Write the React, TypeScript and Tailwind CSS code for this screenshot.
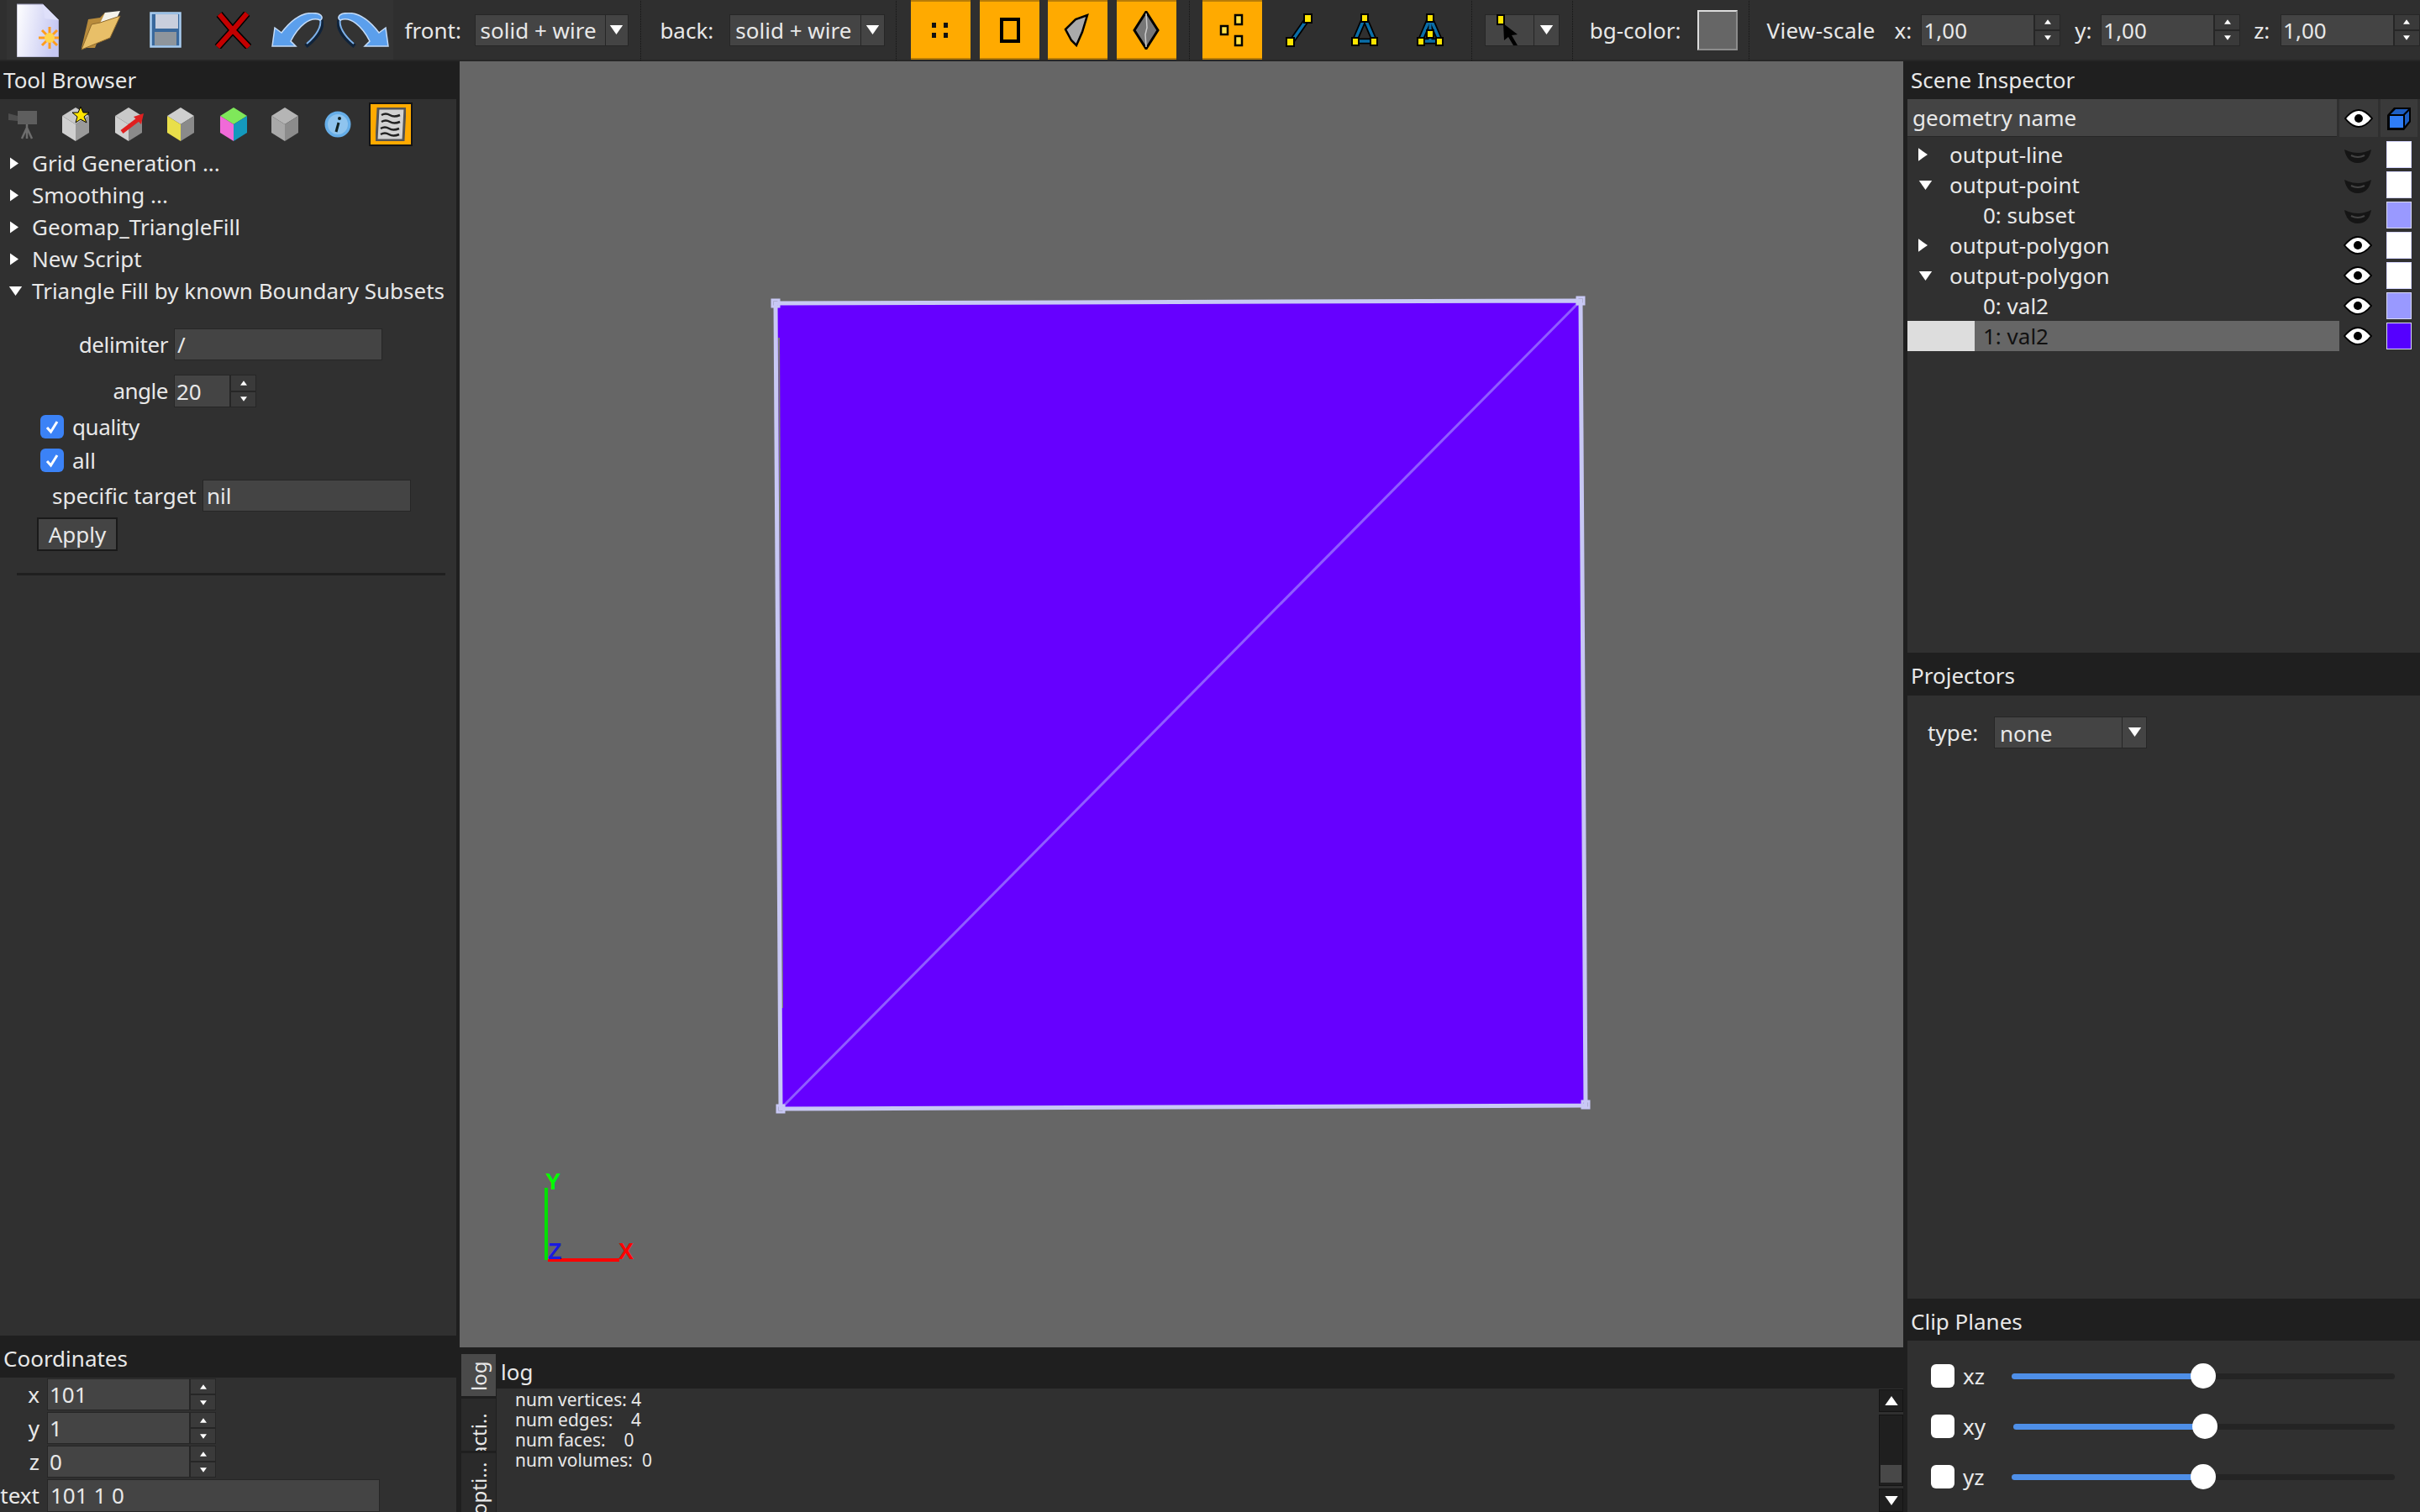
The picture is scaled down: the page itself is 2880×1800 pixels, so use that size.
import React from "react";

// small shared widgets ------------------------------------------------------

const Caret = ({ dir = "down", className = "" }: { dir?: "down" | "right" | "up"; className?: string }) => {
  if (dir === "right") {
    return (
      <svg viewBox="0 0 10 14" className={className}>
        <polygon points="0,0 10,7 0,14" fill="#fff" />
      </svg>
    );
  }
  return (
    <svg viewBox="0 0 14 10" className={className}>
      <polygon points={dir === "down" ? "0,0 14,0 7,10" : "0,10 14,10 7,0"} fill="#fff" />
    </svg>
  );
};

const Select = ({ label, w, split }: { label: React.ReactNode; w: string; split: string }) => (
  <div className={`flex h-[38px] border border-[#262626] bg-[#262626] gap-[1px] ${w}`}>
    <div className={`flex items-center pl-[6px] pt-[2px] bg-[#444444] text-[26px] ${split}`}>{label}</div>
    <div className="flex flex-1 justify-center pt-[12px] bg-[#444444]">
      <Caret className="w-[17px] h-[11px]" />
    </div>
  </div>
);

const Spin = ({ value, w, h = "h-[38px]" }: { value: string; w: string; h?: string }) => (
  <div className={`flex ${h} ${w}`}>
    <div className="flex flex-1 items-center pl-[2px] pt-[1px] bg-[#444444] border border-[#262626] text-[26px]">{value}</div>
    <div className="flex flex-col w-[31px] bg-[#262626] gap-[2px] p-[1px]">
      <div className="flex flex-1 items-center justify-center bg-[#3a3a3a]">
        <Caret dir="up" className="w-[8px] h-[6px]" />
      </div>
      <div className="flex flex-1 items-center justify-center bg-[#3a3a3a]">
        <Caret className="w-[8px] h-[6px]" />
      </div>
    </div>
  </div>
);

const Dots = ({ className }: { className: string }) => (
  <div className={`w-0 h-[73px] border-l border-dotted border-[#151515] ${className}`} />
);

const OrangeBtn = ({ children, className = "" }: { children: React.ReactNode; className?: string }) => (
  <div className={`flex items-center justify-center w-[71px] h-[71px] bg-[#ffaa00] border-y-2 border-[#b87c08] ${className}`}>
    {children}
  </div>
);

const Title = ({ children, h = "h-[45px]" }: { children: React.ReactNode; h?: string }) => (
  <div className={`flex items-center shrink-0 pl-[4px] text-[26px] bg-[#1f1f1f] ${h}`}>{children}</div>
);

const Check = ({ on }: { on?: boolean }) => (
  <div className={`flex items-center justify-center w-[28px] h-[28px] rounded-[6px] ${on ? "bg-[#3b82f6]" : "bg-white"}`}>
    {on && (
      <svg viewBox="0 0 20 20" className="w-[20px] h-[20px]">
        <path d="M4 11 L8.5 16 L16 4" fill="none" stroke="#fff" strokeWidth="3" />
      </svg>
    )}
  </div>
);

// drawn icons ---------------------------------------------------------------

const NewDoc = () => (
  <svg viewBox="0 0 50 64" className="w-[50px] h-[64px]">
    <defs>
      <linearGradient id="docg" x1="0" y1="0" x2="1" y2="0.2">
        <stop offset="0" stopColor="#ffffff" />
        <stop offset="1" stopColor="#c6c8f2" />
      </linearGradient>
    </defs>
    <path d="M0 1 L31 1 L50 20 L50 64 L0 64 Z" fill="url(#docg)" stroke="#9a9ab8" />
    <path d="M31 1 L33 18 L50 20 Z" fill="#dfe0fa" />
    <g stroke="#ff9d1e" strokeWidth="3">
      <path d="M39 28 L39 54 M26 41 L52 41 M30 32 L48 50 M48 32 L30 50" />
    </g>
    <circle cx="39" cy="41" r="6" fill="#ffd650" />
  </svg>
);

const Folder = () => (
  <svg viewBox="0 0 50 50" className="w-[50px] h-[50px]">
    <path d="M2 46 L10 12 L24 10 L30 4 L32 10 L18 46 Z" fill="#b98c3c" />
    <path d="M14 38 L30 4 L48 2 L36 28 Z" fill="#f4f2ea" />
    <path d="M2 48 L14 18 L24 16 L48 8 L36 34 Z" fill="#e8bf68" stroke="#8f6a2c" />
  </svg>
);

const Floppy = () => (
  <svg viewBox="0 0 38 44" className="w-[38px] h-[44px]">
    <rect x="1.5" y="1.5" width="35" height="40" fill="#39689c" stroke="#a9cdf0" strokeWidth="2.5" />
    <rect x="7" y="3" width="27" height="17" fill="#c9cfdd" />
    <rect x="6" y="24" width="26" height="16" fill="#8e959c" />
  </svg>
);

const RedX = () => (
  <svg viewBox="0 0 44 44" className="w-[44px] h-[44px]">
    <path d="M6 3 L22 22 L39 2 M4 42 L22 22 L41 42" fill="none" stroke="#000" strokeWidth="9" />
    <path d="M6 3 L22 22 L39 2 M4 42 L22 22 L41 42" fill="none" stroke="#c40000" strokeWidth="6" />
  </svg>
);

const Curl = ({ flip }: { flip?: boolean }) => (
  <svg viewBox="0 0 62 42" className={`w-[62px] h-[42px] ${flip ? "-scale-x-100" : ""}`}>
    <path d="M58 6 C63 16 56 28 41 40" fill="none" stroke="#10233a" strokeWidth="5" />
    <path d="M58 8 C60 16 54 27 42 37" fill="none" stroke="#7fb2ea" strokeWidth="2" />
    <path
      d="M1 40 L4 18 L12 24 C24 8 38 -2 54 1 C60 2 62 7 58 9 C46 4 32 16 23 34 L29 40 Z"
      fill="#5b9fec"
      stroke="#c5dcf8"
      strokeWidth="1.5"
    />
  </svg>
);

const Cube = ({ top, left, right, children }: { top: string; left: string; right: string; children?: React.ReactNode }) => (
  <svg viewBox="0 0 36 42" className="w-[36px] h-[42px]">
    <polygon points="18,1 34,11 18,21 2,11" fill={top} />
    <polygon points="2,11 18,21 18,41 2,31" fill={left} />
    <polygon points="34,11 18,21 18,41 34,31" fill={right} />
    {children}
  </svg>
);

const Camera = () => (
  <svg viewBox="0 0 36 36" className="w-[36px] h-[36px]">
    <rect x="11" y="2" width="23" height="16" fill="#5e5e5e" />
    <polygon points="0,5 11,8 11,14 0,13" fill="#4e4e4e" />
    <path d="M22 18 L22 22 M22 22 L16 35 M22 22 L22 35 M22 22 L28 35" stroke="#6d6d6d" strokeWidth="2.5" fill="none" />
  </svg>
);

const Info = () => (
  <svg viewBox="0 0 32 32" className="w-[32px] h-[32px]">
    <circle cx="16" cy="16" r="15.5" fill="#66aee8" />
    <circle cx="16" cy="16" r="12" fill="#8fc4ee" />
    <path d="M17 14 L14 25" stroke="#122" strokeWidth="3" />
    <circle cx="18" cy="9" r="2" fill="#122" />
  </svg>
);

const Notes = () => (
  <svg viewBox="0 0 36 40" className="w-[36px] h-[40px]">
    <polygon points="3,1 35,1 33,39 1,39" fill="#d2d2d2" stroke="#555" strokeWidth="3" />
    <path d="M7 9 Q12 6 17 9 T29 9 M7 17 Q12 14 17 17 T29 17 M6 25 Q11 22 16 25 T28 25 M6 32 Q11 29 16 32 T28 32" fill="none" stroke="#222" strokeWidth="2.5" />
  </svg>
);

const Eye = ({ open = true }: { open?: boolean }) =>
  open ? (
    <svg viewBox="0 0 34 24" className="w-[34px] h-[24px]">
      <path d="M1 12 Q17 -8 33 12 Q17 32 1 12 Z" fill="#fff" stroke="#000" strokeWidth="2" />
      <circle cx="17" cy="12" r="5" fill="#000" />
    </svg>
  ) : (
    <svg viewBox="0 0 34 24" className="w-[34px] h-[24px]">
      <path d="M1 6 Q17 14 33 6 Q30 22 17 22 Q4 22 1 6 Z" fill="#151515" />
      <path d="M9 13 Q17 17 25 13" stroke="#444" strokeWidth="2" fill="none" />
    </svg>
  );

const BlueCube = () => (
  <svg viewBox="0 0 32 32" className="w-[32px] h-[32px]">
    <polygon points="2,12 10,3 30,3 30,20 22,30 2,30" fill="#000" />
    <rect x="5" y="13" width="16" height="14" fill="#2f7df6" />
    <polygon points="6,11 12,5 27,5 21,11" fill="#1d5fc4" />
    <polygon points="23,12 28,7 28,19 23,25" fill="#1d5fc4" />
  </svg>
);

const Y = "#ffe500";
const B = "#0a6ea8";

const PointsIcon = () => (
  <svg viewBox="0 0 30 40" className="w-[30px] h-[40px]">
    <g fill="#ffe24a" stroke="#000" strokeWidth="2.5">
      <rect x="2" y="15" width="8" height="10" />
      <rect x="19" y="2" width="8" height="11" />
      <rect x="19" y="27" width="8" height="11" />
    </g>
  </svg>
);

const LineIcon = () => (
  <svg viewBox="0 0 32 40" className="w-[32px] h-[40px]">
    <path d="M6 35 L27 5" stroke="#000" strokeWidth="7" />
    <path d="M6 35 L27 5" stroke={B} strokeWidth="3.5" />
    <g fill={Y} stroke="#000" strokeWidth="2">
      <rect x="1" y="29" width="9" height="10" />
      <rect x="22" y="1" width="9" height="10" />
    </g>
  </svg>
);

const TriIcon = ({ inner }: { inner?: boolean }) => (
  <svg viewBox="0 0 32 40" className="w-[32px] h-[40px]">
    <polygon points="16,5 4,33 28,33" fill="none" stroke="#000" strokeWidth="7" />
    <polygon points="16,5 4,33 28,33" fill="none" stroke={B} strokeWidth="3.5" />
    {inner && <path d="M16 5 L16 33" stroke={B} strokeWidth="3" />}
    <g fill={Y} stroke="#000" strokeWidth="2">
      <rect x="12" y="1" width="8" height="9" />
      <rect x="1" y="29" width="8" height="9" />
      <rect x="23" y="29" width="8" height="9" />
      {inner && <rect x="12" y="20" width="8" height="9" />}
    </g>
  </svg>
);

const Arrow = () => (
  <svg viewBox="0 0 30 38" className="w-[30px] h-[38px]">
    <rect x="1" y="1" width="8" height="11" fill={Y} stroke="#000" strokeWidth="2" />
    <polygon points="8,11 25,24 18,25 25,37 20,37 14,27 9,31" fill="#000" />
  </svg>
);

// page parts ----------------------------------------------------------------

const Toolbar = () => (
  <div className="flex items-center shrink-0 h-[73px] bg-[#2f2f2f] border-b-2 border-[#262626]">
    <div className="flex items-center ml-[8px] w-[460px] h-[71px] bg-[#333333]">
      <div className="ml-[12px]"><NewDoc /></div>
      <div className="ml-[25px]"><Folder /></div>
      <div className="ml-[33px]"><Floppy /></div>
      <div className="ml-[39px]"><RedX /></div>
      <div className="ml-[24px]"><Curl /></div>
      <div className="ml-[16px]"><Curl flip /></div>
    </div>
    <span className="ml-[14px] pt-[2px] text-[26px] w-[83px]">front:</span>
    <Select label="solid + wire" w="w-[184px]" split="w-[154px]" />
    <Dots className="ml-[14px]" />
    <span className="ml-[22px] pt-[2px] text-[26px] w-[83px]">back:</span>
    <Select label="solid + wire" w="w-[185px]" split="w-[155px]" />
    <Dots className="ml-[13px]" />
    <OrangeBtn className="ml-[17px]">
      <svg viewBox="0 0 24 24" className="w-[24px] h-[24px]">
        <path d="M1 3h5v6H1zM15 3h5v6h-5zM1 15h5v6H1zM15 15h5v6h-5z" fill="#111" />
      </svg>
    </OrangeBtn>
    <OrangeBtn className="ml-[11px]">
      <div className="w-[24px] h-[30px] border-[4px] border-black" />
    </OrangeBtn>
    <OrangeBtn className="ml-[10px]">
      <svg viewBox="0 0 32 40" className="w-[32px] h-[40px]">
        <polygon points="2,19 14,7 28,2 22,22 15,38 9,32" fill="#aaaaaa" stroke="#000" strokeWidth="2.5" />
      </svg>
    </OrangeBtn>
    <OrangeBtn className="ml-[11px]">
      <svg viewBox="0 0 32 46" className="w-[32px] h-[46px]">
        <polygon points="16,1 30,23 16,45 2,23" fill="#777" stroke="#000" strokeWidth="3" />
        <path d="M16 3 L17 20 L15 28 L16 43" stroke="#ccc" strokeWidth="1.5" fill="none" />
      </svg>
    </OrangeBtn>
    <Dots className="ml-[15px]" />
    <OrangeBtn className="ml-[15px]"><PointsIcon /></OrangeBtn>
    <div className="ml-[28px]"><LineIcon /></div>
    <div className="ml-[46px]"><TriIcon /></div>
    <div className="ml-[46px]"><TriIcon inner /></div>
    <Dots className="ml-[33px]" />
    <div className="flex ml-[15px] w-[89px] h-[38px] border border-[#262626] bg-[#262626] gap-[1px]">
      <div className="flex items-center justify-center w-[57px] bg-[#444444]"><Arrow /></div>
      <div className="flex flex-1 justify-center pt-[12px] bg-[#444444]">
        <Caret className="w-[17px] h-[11px]" />
      </div>
    </div>
    <Dots className="ml-[15px]" />
    <span className="ml-[20px] pt-[2px] text-[26px] w-[128px]">bg-color:</span>
    <div className="w-[48px] h-[48px] bg-[#666666] border-2 border-[#8c8c8c] border-t-[#dddddd] border-l-[#dddddd]" />
    <Dots className="ml-[13px]" />
    <span className="ml-[21px] pt-[2px] text-[26px] w-[152px] tracking-[0.3px]">View-scale</span>
    <span className="pt-[2px] text-[26px] w-[32px]">x:</span>
    <Spin value="1,00" w="w-[166px]" />
    <span className="ml-[17px] pt-[2px] text-[26px] w-[31px]">y:</span>
    <Spin value="1,00" w="w-[166px]" />
    <span className="ml-[16px] pt-[2px] text-[26px] w-[32px]">z:</span>
    <Spin value="1,00" w="w-[166px]" />
  </div>
);

const treeRows = ["Grid Generation ...", "Smoothing ...", "Geomap_TriangleFill", "New Script", "Triangle Fill by known Boundary Subsets"];

const LeftPanel = () => (
  <div className="flex flex-col shrink-0 w-[547px] bg-[#1f1f1f]">
    <Title>Tool Browser</Title>
    <div className="flex flex-col flex-1 w-[543px] bg-[#303030]">
      <div className="flex items-center shrink-0 h-[57px] pl-[10px] pt-[3px]">
        <div className="w-[62px]"><Camera /></div>
        <div className="w-[63px]">
          <Cube top="#c9c9c9" left="#d0d0d0" right="#9a9a9a">
            <polygon points="24,0 27,7 34,7 28,12 31,19 24,15 18,19 20,12 14,7 21,7" fill={Y} stroke="#000" />
          </Cube>
        </div>
        <div className="w-[62px]">
          <Cube top="#c9c9c9" left="#d0d0d0" right="#8a8a8a">
            <path d="M10 30 L31 14" stroke="#e02020" strokeWidth="5" />
            <polygon points="36,8 33,21 24,12" fill="#e02020" />
          </Cube>
        </div>
        <div className="w-[63px]"><Cube top="#cfcfcf" left="#e9df4a" right="#8a8a8a" /></div>
        <div className="w-[61px]"><Cube top="#7fe85a" left="#f06ad8" right="#1499bd" /></div>
        <div className="w-[65px]"><Cube top="#b5b5b5" left="#a8a8a8" right="#8c8c8c" /></div>
        <div className="w-[53px]"><Info /></div>
        <div className="flex items-center justify-center w-[52px] h-[52px] bg-[#ffaa00] border-2 border-[#141414]"><Notes /></div>
      </div>
      {treeRows.map((t, i) => (
        <div key={t} className="flex items-center shrink-0 h-[38px] pl-[10px] text-[26px]">
          <div className="w-[28px]">
            {i === 4 ? <Caret className="w-[17px] h-[11px]" /> : <Caret dir="right" className="ml-[2px] w-[10px] h-[15px]" />}
          </div>
          {t}
        </div>
      ))}
      <div className="flex items-center mt-[26px] h-[38px] text-[26px]">
        <span className="w-[200px] text-right tracking-[-0.4px]">delimiter</span>
        <div className="flex items-center ml-[7px] w-[248px] h-[38px] pl-[3px] bg-[#444444] border border-[#262626]">/</div>
      </div>
      <div className="flex items-center mt-[17px] h-[39px] text-[26px]">
        <span className="w-[200px] text-right tracking-[-0.5px]">angle</span>
        <Spin value="20" w="w-[98px] ml-[7px]" h="h-[39px]" />
      </div>
      <div className="flex items-center gap-[10px] mt-[9px] ml-[48px] h-[28px] text-[26px] tracking-[-0.4px]">
        <Check on />
        quality
      </div>
      <div className="flex items-center gap-[10px] mt-[12px] ml-[48px] h-[28px] text-[26px]">
        <Check on />
        all
      </div>
      <div className="flex items-center mt-[9px] h-[38px] text-[26px]">
        <span className="ml-[62px] w-[179px]">specific target</span>
        <div className="flex items-center w-[248px] h-[38px] pl-[4px] bg-[#444444] border border-[#262626]">nil</div>
      </div>
      <div className="flex items-center justify-center mt-[7px] ml-[44px] w-[96px] h-[40px] bg-[#444444] border-2 border-[#1a1a1a] text-[26px]">Apply</div>
      <div className="mt-[26px] ml-[20px] w-[510px] h-[3px] bg-[#1f1f1f]" />
    </div>
    <Title h="h-[50px] pt-[4px]">Coordinates</Title>
    <div className="flex flex-col shrink-0 h-[160px] w-[543px] bg-[#303030] text-[26px]">
      {["101", "1", "0"].map((v, i) => (
        <div key={i} className="flex items-center h-[40px]">
          <span className="w-[47px] text-right">{["x", "y", "z"][i]}</span>
          <Spin value={v} w="w-[201px] ml-[9px]" />
        </div>
      ))}
      <div className="flex items-center h-[40px]">
        <span className="w-[47px] text-right">text</span>
        <div className="flex items-center ml-[9px] w-[396px] h-[39px] pl-[3px] bg-[#444444] border border-[#262626]">101 1 0</div>
      </div>
    </div>
  </div>
);

const Canvas = () => (
  <div className="shrink-0 h-[1531px] bg-[#666666]">
    <svg viewBox="547 73 1718 1531" className="block w-full h-full">
      <polygon points="923,361 1881,358 1887,1316 929,1320" fill="#6600ff" />
      <path d="M927 402 L931 1200" stroke="#777777" strokeWidth="2" />
      <path d="M929 1200 L930 1310" stroke="#5c9a4a" strokeWidth="2" />
      <path d="M929 1320 L1881 358" stroke="#8f5cff" strokeWidth="3" />
      <polygon points="923,361 1881,358 1887,1316 929,1320" fill="none" stroke="#c8c8f5" strokeWidth="5" />
      <g fill="none" stroke="#c8c8f5" strokeWidth="3">
        <rect x="919" y="357" width="8" height="8" />
        <rect x="1877" y="354" width="8" height="8" />
        <rect x="1883" y="1311" width="8" height="8" />
        <rect x="925" y="1316" width="8" height="8" />
      </g>
      <rect x="648" y="1414" width="4" height="86" fill="#00e000" />
      <rect x="652" y="1498" width="85" height="4" fill="#ff0000" />
      <g className="font-['Liberation_Sans',sans-serif]" fontSize="27" fontWeight="700">
        <text x="649" y="1416" fill="#00ff00">Y</text>
        <text x="652" y="1499" fill="#1a1ae0">Z</text>
        <text x="736" y="1499" fill="#ff0000">X</text>
      </g>
    </svg>
  </div>
);

const logLines = ["num vertices: 4", "num edges:    4", "num faces:    0", "num volumes:  0"];

const Tab = ({ label, active, className }: { label: string; active?: boolean; className: string }) => (
  <div className={`flex justify-center overflow-hidden rotate-180 w-[41px] ${active ? "bg-[#4a4a4a]" : "bg-[#2a2a2a]"} ${className}`}>
    <span className="[writing-mode:vertical-rl] text-[24px] whitespace-nowrap">{label}</span>
  </div>
);

const LogPanel = () => (
  <div className="flex flex-1 min-h-0 bg-[#1f1f1f] overflow-hidden">
    <div className="flex flex-col shrink-0 w-[44px] pl-[2px] pt-[8px] gap-[3px]">
      <Tab label="log" active className="h-[50px] pt-[6px]" />
      <Tab label="acti.." className="h-[62px] items-start [&>span]:-mt-[8px]" />
      <Tab label="opti..." className="h-[70px] items-start [&>span]:-mt-[4px]" />
    </div>
    <div className="flex flex-col flex-1 min-w-0">
      <div className="flex items-center shrink-0 h-[49px] pl-[5px] pt-[10px] text-[26px]">log</div>
      <div className="flex flex-1 bg-[#303030] min-h-0">
        <div className="flex-1 pl-[22px] pt-[1px] text-[21px] leading-[24px] whitespace-pre">
          {logLines.map((l) => (
            <div key={l}>{l}</div>
          ))}
        </div>
        <div className="flex flex-col shrink-0 w-[29px] gap-[3px] mt-[1px]">
          <div className="flex items-center justify-center h-[27px] bg-[#1f1f1f] border border-[#141414]">
            <Caret dir="up" className="w-[16px] h-[11px]" />
          </div>
          <div className="flex flex-col justify-end flex-1 pb-[3px] px-[1px] bg-[#1f1f1f] border border-[#141414]">
            <div className="h-[21px] bg-[#484848]" />
          </div>
          <div className="flex items-center justify-center h-[28px] bg-[#1f1f1f] border border-[#141414]">
            <Caret className="w-[16px] h-[11px]" />
          </div>
        </div>
      </div>
    </div>
  </div>
);

const sceneRows = [
  { label: "output-line", arrow: "right", open: false, color: "#ffffff" },
  { label: "output-point", arrow: "down", open: false, color: "#ffffff" },
  { label: "0: subset", open: false, color: "#9999ff" },
  { label: "output-polygon", arrow: "right", open: true, color: "#ffffff" },
  { label: "output-polygon", arrow: "down", open: true, color: "#ffffff" },
  { label: "0: val2", open: true, color: "#9999ff" },
  { label: "1: val2", open: true, color: "#5500ff", selected: true },
];

const ClipRow = ({ label, pl, fill }: { label: string; pl: string; fill: string }) => (
  <div className="flex items-center h-[60px] pl-[28px] text-[26px]">
    <Check />
    <span className="w-[58px] ml-[10px]">{label}</span>
    <div className={`flex items-center flex-1 pr-[30px] ${pl}`}>
      <div className={`h-[7px] rounded-l-full bg-[#4e8fe8] ${fill}`} />
      <div className="w-[30px] h-[30px] rounded-full bg-white -ml-[1px]" />
      <div className="flex-1 h-[7px] rounded-r-full bg-[#242424]" />
    </div>
  </div>
);

const RightPanel = () => (
  <div className="flex flex-col shrink-0 w-[615px] pl-[5px] bg-[#1f1f1f]">
    <Title>Scene Inspector</Title>
    <div className="flex flex-col shrink-0 h-[659px] bg-[#303030]">
      <div className="flex shrink-0 h-[45px] gap-[3px] mb-[3px]">
        <div className="flex items-center w-[511px] pl-[6px] bg-[#444444] border-b border-[#262626] text-[26px]">geometry name</div>
        <div className="flex items-center justify-center w-[46px] bg-[#3a3a3a]"><Eye /></div>
        <div className="flex items-center justify-center w-[44px] bg-[#3a3a3a]"><BlueCube /></div>
      </div>
      {sceneRows.map((r, i) => (
        <div key={i} className="flex items-center shrink-0 h-[36px]">
          <div className={`flex items-center w-[514px] h-full text-[26px] ${r.selected ? "bg-[#666666] text-[#111111]" : ""}`}>
            {r.selected && <div className="w-[80px] h-full bg-[#dddddd]" />}
            {!r.selected && (
              <div className={`${r.arrow ? "w-[50px] pl-[13px]" : "w-[90px]"}`}>
                {r.arrow === "right" && <Caret dir="right" className="w-[11px] h-[16px]" />}
                {r.arrow === "down" && <Caret className="w-[17px] h-[11px]" />}
              </div>
            )}
            <span className={r.selected ? "ml-[10px]" : ""}>{r.label}</span>
          </div>
          <div className="flex justify-center w-[44px]"><Eye open={r.open} /></div>
          <div className="ml-[12px] w-[30px] h-[32px] border border-[#d8d8ff]" style={{ backgroundColor: r.color }} />
        </div>
      ))}
    </div>
    <Title h="h-[51px] pt-[4px]">Projectors</Title>
    <div className="flex shrink-0 h-[718px] pt-[25px] pl-[24px] bg-[#303030] text-[26px]">
      <div className="flex items-center h-[38px]">
        <span className="w-[79px]">type:</span>
        <Select label="none" w="w-[182px]" split="w-[151px]" />
      </div>
    </div>
    <Title h="h-[50px] pt-[4px]">Clip Planes</Title>
    <div className="flex flex-col flex-1 pt-[12px] bg-[#303030]">
      <ClipRow label="xz" pl="" fill="w-[214px]" />
      <ClipRow label="xy" pl="pl-[2px]" fill="w-[214px]" />
      <ClipRow label="yz" pl="" fill="w-[214px]" />
    </div>
  </div>
);

export default function App() {
  return (
    <div className="flex flex-col w-[2880px] h-[1800px] overflow-hidden bg-[#1f1f1f] text-[#e8e8e8] font-['Noto_Sans',sans-serif]">
      <Toolbar />
      <div className="flex flex-1 min-h-0">
        <LeftPanel />
        <div className="flex flex-col flex-1 min-w-0">
          <Canvas />
          <LogPanel />
        </div>
        <RightPanel />
      </div>
    </div>
  );
}
